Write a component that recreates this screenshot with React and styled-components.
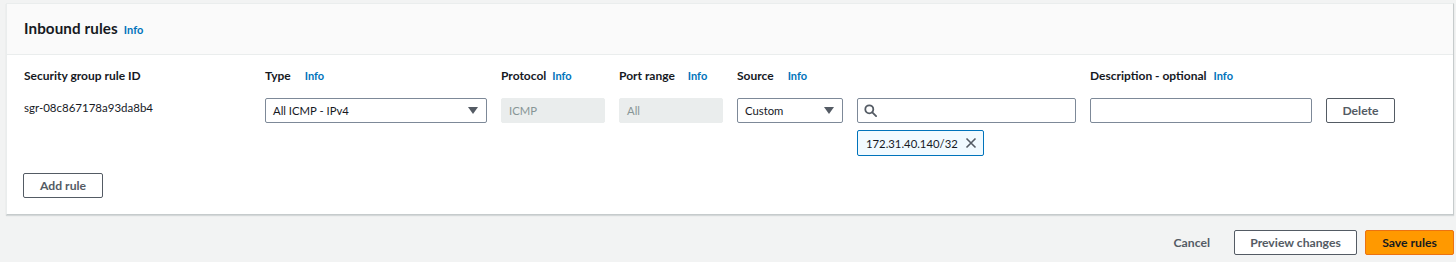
import React from "react";
import styled, { createGlobalStyle } from "styled-components";

const Global = createGlobalStyle`
  html, body { margin: 0; padding: 0; background: #f2f3f3; }
  body { font-family: Lato, "Liberation Sans", Arial, sans-serif; color: #16191f; }
  * { box-sizing: border-box; }
`;

const Page = styled.div`
  width: 1456px;
  height: 262px;
  padding: 3px 2px 0 6px;
  display: flex;
  flex-direction: column;
`;

const Card = styled.section`
  background: #fff;
  border: 1px solid #eaeded;
  border-right-color: #c6cbcc;
  border-bottom-color: #c6cbcc;
  box-shadow: 0 1px 1px rgba(0, 28, 36, 0.12);
  height: 212px;
  display: flex;
  flex-direction: column;
`;

const Header = styled.header`
  height: 51px;
  background: #fafafa;
  border-bottom: 1px solid #eaeded;
  display: flex;
  align-items: center;
  padding: 0 0 2px 17px;
`;

const Title = styled.h2`
  margin: 0;
  font-size: 15.2px;
  font-weight: 700;
  letter-spacing: 0.1px;
`;

const Info = styled.a`
  font-size: 11px;
  font-weight: 700;
  color: #0073bb;
  text-decoration: none;
  margin-left: ${(p) => p.$gap || 6}px;
  padding-top: ${(p) => p.$top || 0}px;
`;

const Body = styled.div`
  padding: 11px 0 0 17px;
  display: flex;
  flex-direction: column;
`;

const RuleGrid = styled.div`
  display: grid;
  grid-template-columns: 227px 222px 104px 104px 106px 219px 222px 69px;
  column-gap: 14px;
  align-items: start;
`;

const Label = styled.div`
  grid-column: span ${(p) => p.$span || 1};
  display: flex;
  align-items: baseline;
  font-size: 12px;
  font-weight: 700;
  height: 20px;
  line-height: 20px;
  margin-bottom: 12px;
  white-space: nowrap;
`;

const IdText = styled.div`
  font-size: 11.5px;
  line-height: 16px;
  padding-top: 2px;
`;

const Field = styled.div`
  height: 25px;
  border: 1px solid ${(p) => (p.$disabled ? "#eaeded" : "#7d8998")};
  background: ${(p) => (p.$disabled ? "#eaeded" : "#fff")};
  color: ${(p) => (p.$disabled ? "#879596" : "#16191f")};
  border-radius: 2px;
  display: flex;
  align-items: center;
  padding: 0 8px 0 ${(p) => (p.$icon ? 6 : 7)}px;
  font-size: 11.3px;
  gap: 6px;
`;

const Grow = styled.span`
  flex: 1;
`;

const Stack = styled.div`
  display: flex;
  flex-direction: column;
  gap: 7px;
  align-items: flex-start;
`;

const Token = styled.div`
  height: 26px;
  width: 127px;
  border: 1px solid #0073bb;
  background: #f1faff;
  border-radius: 2px;
  display: flex;
  align-items: center;
  padding: 0 6px 0 8px;
  font-size: 11.3px;
  justify-content: space-between;
`;

const Button = styled.button`
  height: 25px;
  width: ${(p) => p.$w}px;
  border: 1px solid ${(p) => (p.$primary ? "#ec7211" : "#545b64")};
  background: ${(p) => (p.$primary ? "#ff9900" : "#fff")};
  color: ${(p) => (p.$primary ? "#16191f" : "#545b64")};
  border-radius: 2px;
  font-family: inherit;
  font-size: 12.2px;
  font-weight: 700;
  padding: 0;
  cursor: pointer;
`;

const AddRow = styled.div`
  margin-top: 17px;
  margin-left: -1px;
`;

const Footer = styled.div`
  display: flex;
  justify-content: flex-end;
  align-items: center;
  gap: 8px;
  margin-top: 15px;
`;

const LinkButton = styled.button`
  border: none;
  background: transparent;
  color: #545b64;
  font-family: inherit;
  font-size: 12.2px;
  font-weight: 700;
  padding: 0;
  margin-right: 16px;
  cursor: pointer;
`;

const Caret = () => (
  <svg width="10" height="7" viewBox="0 0 10 7">
    <path d="M0 0h10L5 7z" fill="#545b64" />
  </svg>
);

const Search = () => (
  <svg width="13" height="13" viewBox="0 0 13 13" fill="none" stroke="#545b64" strokeWidth="1.8">
    <circle cx="5.3" cy="5.3" r="4" />
    <path d="M8.3 8.3l3.8 3.8" strokeLinecap="round" />
  </svg>
);

const Close = () => (
  <svg width="12" height="12" viewBox="0 0 12 12" stroke="#545b64" strokeWidth="1.6">
    <path d="M1.5 1.5l9 9M10.5 1.5l-9 9" />
  </svg>
);

export default function App() {
  return (
    <>
      <Global />
      <Page>
        <Card>
          <Header>
            <Title>Inbound rules</Title>
            <Info href="#" $gap={6} $top={2}>Info</Info>
          </Header>
          <Body>
            <RuleGrid>
              <Label>Security group rule ID</Label>
              <Label>Type<Info href="#" $gap={14}>Info</Info></Label>
              <Label>Protocol<Info href="#" $gap={6}>Info</Info></Label>
              <Label>Port range<Info href="#" $gap={13}>Info</Info></Label>
              <Label $span={2}>Source<Info href="#" $gap={14}>Info</Info></Label>
              <Label>Description - optional<Info href="#" $gap={7}>Info</Info></Label>
              <div />

              <IdText>sgr-08c867178a93da8b4</IdText>
              <Field>
                <Grow>All ICMP - IPv4</Grow>
                <Caret />
              </Field>
              <Field $disabled>ICMP</Field>
              <Field $disabled>All</Field>
              <Field>
                <Grow>Custom</Grow>
                <Caret />
              </Field>
              <Stack>
                <Field $icon style={{ width: "100%" }}>
                  <Search />
                </Field>
                <Token>
                  <span>172.31.40.140/32</span>
                  <Close />
                </Token>
              </Stack>
              <Field />
              <Button $w={69}>Delete</Button>
            </RuleGrid>
            <AddRow>
              <Button $w={80}>Add rule</Button>
            </AddRow>
          </Body>
        </Card>
        <Footer>
          <LinkButton>Cancel</LinkButton>
          <Button $w={123}>Preview changes</Button>
          <Button $w={89} $primary>Save rules</Button>
        </Footer>
      </Page>
    </>
  );
}
